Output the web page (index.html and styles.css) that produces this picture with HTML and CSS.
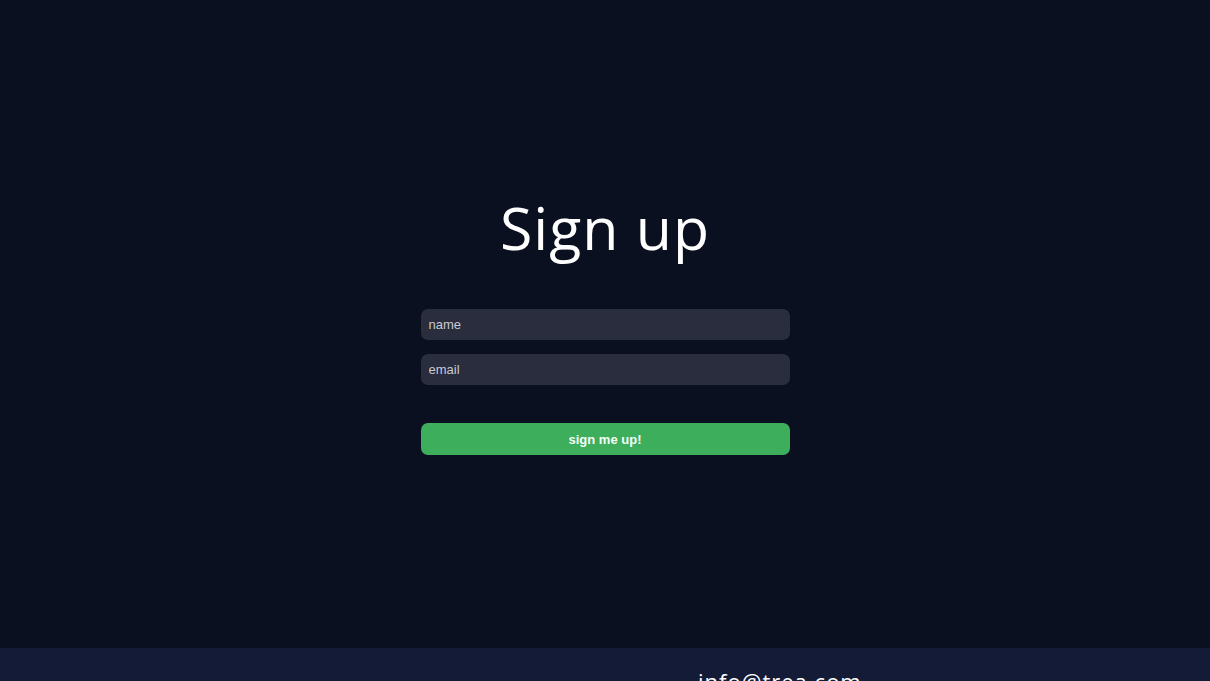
FILE: index.html
```html
<!DOCTYPE html>
<html lang="en">
<head>
<meta charset="utf-8">
<title>Sign up</title>
<link rel="stylesheet" href="styles.css">
</head>
<body>
<main class="signup">
  <h1 class="signup-title">Sign up</h1>
  <form class="signup-form">
    <input class="field" type="text" placeholder="name">
    <input class="field" type="email" placeholder="email">
    <button class="submit" type="button">sign me up!</button>
  </form>
</main>
<footer class="footer">
  <div class="footer-col"></div>
  <div class="footer-col footer-contact">
    <p class="footer-email">info@trea.com</p>
  </div>
</footer>
</body>
</html>
```
FILE: styles.css
```css
html, body {
  margin: 0;
  padding: 0;
  background: #0b1020;
}
body {
  font-family: "Liberation Sans", Arial, sans-serif;
  color: #ffffff;
}
.signup {
  height: 648px;
  display: flex;
  flex-direction: column;
  align-items: center;
  justify-content: center;
  box-sizing: border-box;
  padding-bottom: 2px;
}
.signup-title {
  margin: 0 0 46px;
  font-family: "Open Sans", "Lato", sans-serif;
  font-weight: 400;
  font-size: 59px;
  line-height: 72px;
  letter-spacing: 1px;
  color: #ffffff;
}
.signup-form {
  width: 369px;
  display: flex;
  flex-direction: column;
}
.field {
  height: 31px;
  box-sizing: border-box;
  border: none;
  border-radius: 7px;
  background: #2a2d3e;
  padding: 0 8px;
  margin-bottom: 14px;
  font-family: "Liberation Sans", Arial, sans-serif;
  font-size: 13px;
  color: #d0d0d8;
  outline: none;
}
.field::placeholder {
  color: #c9cad3;
}
.submit {
  margin-top: 24px;
  height: 32px;
  border: none;
  border-radius: 7px;
  background: #3cae5c;
  color: #f4fff6;
  font-family: "Liberation Sans", Arial, sans-serif;
  font-weight: 700;
  font-size: 13px;
  cursor: pointer;
}
.footer {
  background: #131b36;
  display: grid;
  grid-template-columns: 1fr 1fr;
}
.footer-contact {
  padding-left: 93px;
}
.footer-email {
  margin: 0;
  padding-top: 18px;
  font-family: "Open Sans", "Lato", sans-serif;
  font-size: 22px;
  letter-spacing: 1px;
  color: #ffffff;
}
```
